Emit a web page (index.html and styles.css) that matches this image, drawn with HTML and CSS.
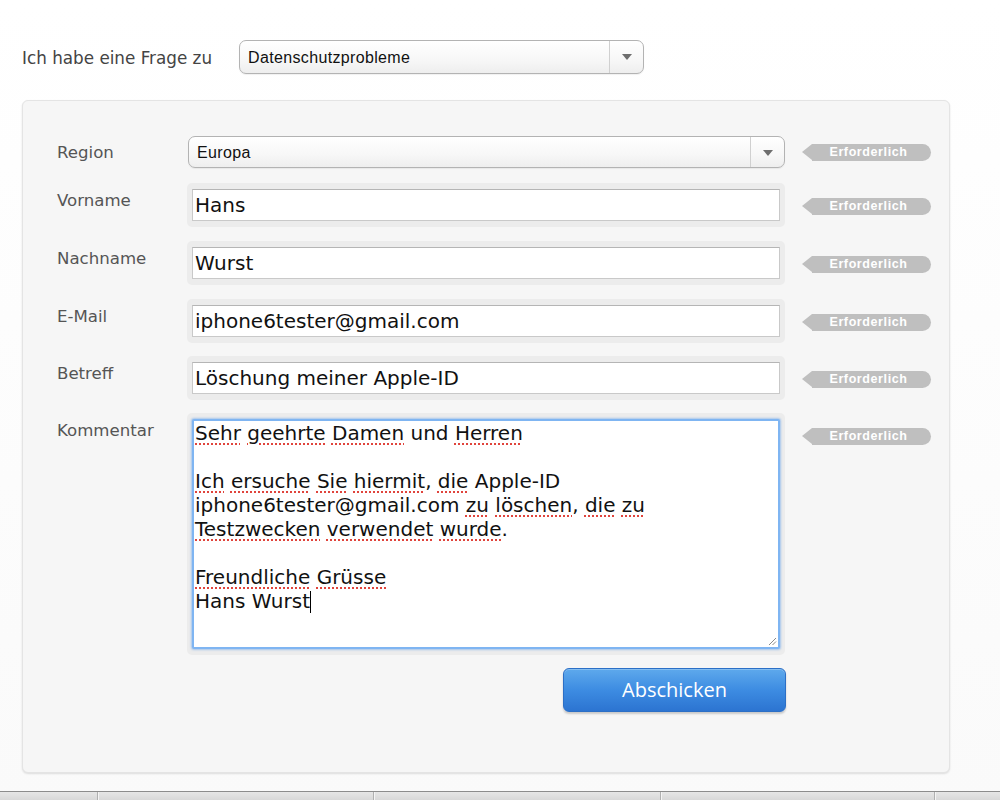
FILE: index.html
```html
<!DOCTYPE html>
<html lang="de">
<head>
<meta charset="utf-8">
<title>Kontakt</title>
<link rel="stylesheet" href="styles.css">
</head>
<body>
<div class="page">
  <div class="topline">
    <span class="toplabel">Ich habe eine Frage zu</span>
    <div class="select select-top">
      <span class="select-text">Datenschutzprobleme</span>
      <span class="select-arrow"><span class="tri"></span></span>
    </div>
  </div>

  <div class="panel">
    <div class="row row-select">
      <div class="label label-mid">Region</div>
      <div class="select select-region">
        <span class="select-text">Europa</span>
        <span class="select-arrow"><span class="tri"></span></span>
      </div>
      <div class="badge">Erforderlich</div>
    </div>

    <div class="row">
      <div class="label">Vorname</div>
      <div class="well"><div class="field">Hans</div></div>
      <div class="badge badge-top">Erforderlich</div>
    </div>

    <div class="row">
      <div class="label">Nachname</div>
      <div class="well"><div class="field">Wurst</div></div>
      <div class="badge badge-top">Erforderlich</div>
    </div>

    <div class="row">
      <div class="label">E-Mail</div>
      <div class="well"><div class="field">iphone6tester@gmail.com</div></div>
      <div class="badge badge-top">Erforderlich</div>
    </div>

    <div class="row row-tight">
      <div class="label">Betreff</div>
      <div class="well"><div class="field">Löschung meiner Apple-ID</div></div>
      <div class="badge badge-top">Erforderlich</div>
    </div>

    <div class="row row-tight">
      <div class="label">Kommentar</div>
      <div class="well">
        <div class="textarea">
          <div class="line"><span class="sp">Sehr</span> <span class="sp">geehrte</span> <span class="sp">Damen</span> und <span class="sp">Herren</span></div>
          <div class="line">&nbsp;</div>
          <div class="line"><span class="sp">Ich</span> <span class="sp">ersuche</span> <span class="sp">Sie</span> <span class="sp">hiermit</span>, <span class="sp">die</span> Apple-ID</div>
          <div class="line">iphone6tester@gmail.com <span class="sp">zu</span> <span class="sp">löschen</span>, <span class="sp">die</span> <span class="sp">zu</span></div>
          <div class="line"><span class="sp">Testzwecken</span> <span class="sp">verwendet</span> <span class="sp">wurde</span>.</div>
          <div class="line">&nbsp;</div>
          <div class="line"><span class="sp">Freundliche</span> <span class="sp">Grüsse</span></div>
          <div class="line">Hans Wurst<span class="caret"></span></div>
          <svg class="grip" width="9" height="9" viewBox="0 0 9 9"><path d="M8 1 L1 8 M8 4.5 L4.5 8" stroke="#8a8a8a" stroke-width="1" fill="none"/></svg>
        </div>
      </div>
      <div class="badge badge-top">Erforderlich</div>
    </div>

    <div class="row row-button">
      <div></div>
      <button class="submit" type="button">Abschicken</button>
      <div></div>
    </div>
  </div>

  <div class="tabbar">
    <div class="tabseg s1"></div>
    <div class="tabseg s2"></div>
    <div class="tabseg s3"></div>
    <div class="tabseg s4"></div>
    <div class="tabseg s5"></div>
  </div>
</div>
</body>
</html>
```

FILE: styles.css
```css
html, body {
  margin: 0;
  padding: 0;
  background: #ffffff;
  overflow: hidden;
}

.page {
  width: 1000px;
  height: 800px;
  font-family: "DejaVu Sans", "Noto Sans", sans-serif;
  color: #333;
  background: linear-gradient(#ffffff, #fafafa);
}

.topline {
  display: flex;
  align-items: center;
  padding: 40px 0 0 22px;
  height: 33px;
}

.toplabel {
  width: 217px;
  font-size: 16.8px;
  color: #444;
  line-height: 20px;
  margin-top: 3px;
}

.select {
  box-sizing: border-box;
  display: flex;
  align-items: stretch;
  border: 1px solid #b3b3b3;
  border-radius: 7px;
  background: linear-gradient(#ffffff 0%, #f7f7f7 60%, #eeeeee 100%);
  box-shadow: 0 1px 1px rgba(0,0,0,0.06);
  font-family: "Liberation Sans", Arial, sans-serif;
  font-size: 16px;
  color: #111;
}

.select-top {
  width: 405px;
  height: 34px;
}

.select-region {
  width: 597px;
  height: 32px;
  margin-left: 1px;
}

.select-text {
  flex: 1;
  display: flex;
  align-items: center;
  padding-left: 8px;
  padding-top: 2px;
  letter-spacing: 0.35px;
}

.select-arrow {
  width: 33px;
  border-left: 1px solid #d0d0d0;
  display: flex;
  align-items: center;
  justify-content: center;
}

.tri {
  width: 0;
  height: 0;
  border-left: 5px solid transparent;
  border-right: 5px solid transparent;
  border-top: 6px solid #6e6e6e;
  margin-top: 1px;
}

.panel {
  box-sizing: border-box;
  width: 928px;
  height: 673px;
  margin: 27px 0 0 22px;
  padding: 35px 0 0 34px;
  background: #f6f6f6;
  border: 1px solid #e4e4e4;
  border-radius: 6px;
  box-shadow: 0 1px 2px rgba(0,0,0,0.12);
}

.row {
  display: grid;
  grid-template-columns: 130px 598px 146px;
  column-gap: 0;
  align-items: start;
  margin-bottom: 14px;
}

.row-tight {
  margin-top: -1px;
}

.row-select {
  align-items: center;
  margin-bottom: 15px;
}

.label {
  font-size: 16.6px;
  line-height: 20px;
  color: #555;
  padding-top: 8px;
}

.label-mid {
  padding-top: 1px;
}

.well {
  background: #ececec;
  border-radius: 5px;
  padding: 6px 5px;
}

.field {
  box-sizing: border-box;
  height: 32px;
  background: #fff;
  border: 1px solid #c9c9c9;
  border-top-color: #b5b5b5;
  padding: 0 0 0 2px;
  font-size: 20px;
  line-height: 30px;
  color: #111;
}

.textarea {
  position: relative;
  box-sizing: border-box;
  height: 230px;
  background: #fff;
  border: 2px solid #7fb5f2;
  border-radius: 2px;
  box-shadow: 0 0 2px 1px rgba(110,165,235,0.55);
  padding: 0 0 0 1px;
  font-size: 20px;
  line-height: 24px;
  color: #111;
}

.line {
  white-space: nowrap;
}

.sp {
  text-decoration: underline dotted #e0443c;
  text-decoration-thickness: 2px;
  text-underline-offset: 3px;
}

.caret {
  display: inline-block;
  width: 1px;
  height: 22px;
  background: #000;
  vertical-align: -5px;
}

.grip {
  position: absolute;
  right: 1px;
  bottom: 1px;
}

.badge {
  position: relative;
  box-sizing: border-box;
  width: 119px;
  height: 17px;
  margin-left: 27px;
  background: #bfbfbf;
  border-radius: 0 9px 9px 0;
  color: #fff;
  font-family: "Liberation Sans", Arial, sans-serif;
  font-weight: bold;
  font-size: 12.5px;
  letter-spacing: 0.6px;
  line-height: 17px;
  text-align: center;
  padding-right: 6px;
}

.badge::before {
  content: "";
  position: absolute;
  left: -10px;
  top: 0;
  width: 0;
  height: 0;
  border-top: 8.5px solid transparent;
  border-bottom: 8.5px solid transparent;
  border-right: 10px solid #bfbfbf;
}

.badge-top {
  margin-top: 15px;
}

.row-button {
  margin-top: -1px;
}

.submit {
  justify-self: end;
  width: 223px;
  height: 44px;
  margin-right: -1px;
  border: 1px solid #2c6fc6;
  border-radius: 6px;
  background: linear-gradient(#5ea9ec 0%, #3d8ce2 50%, #2c74d1 100%);
  box-shadow: 0 2px 2px rgba(0,0,0,0.18), inset 0 1px 0 rgba(255,255,255,0.25);
  color: #fff;
  font-family: "Open Sans", "DejaVu Sans", sans-serif;
  font-size: 20px;
  padding: 0;
  padding-bottom: 2px;
}

.tabbar {
  display: flex;
  height: 9px;
  margin-top: 18px;
  border-top: 1px solid #8c8c8c;
  background: linear-gradient(#e6e6e6, #d6d6d6);
}

.tabseg {
  border-right: 1px solid #b0b0b0;
  box-shadow: 1px 0 0 #f4f4f4;
}

.s1 { width: 97px; }
.s2 { width: 275px; }
.s3 { width: 286px; }
.s4 { width: 273px; }
.s5 { flex: 1; border-right: none; box-shadow: none; }
```
